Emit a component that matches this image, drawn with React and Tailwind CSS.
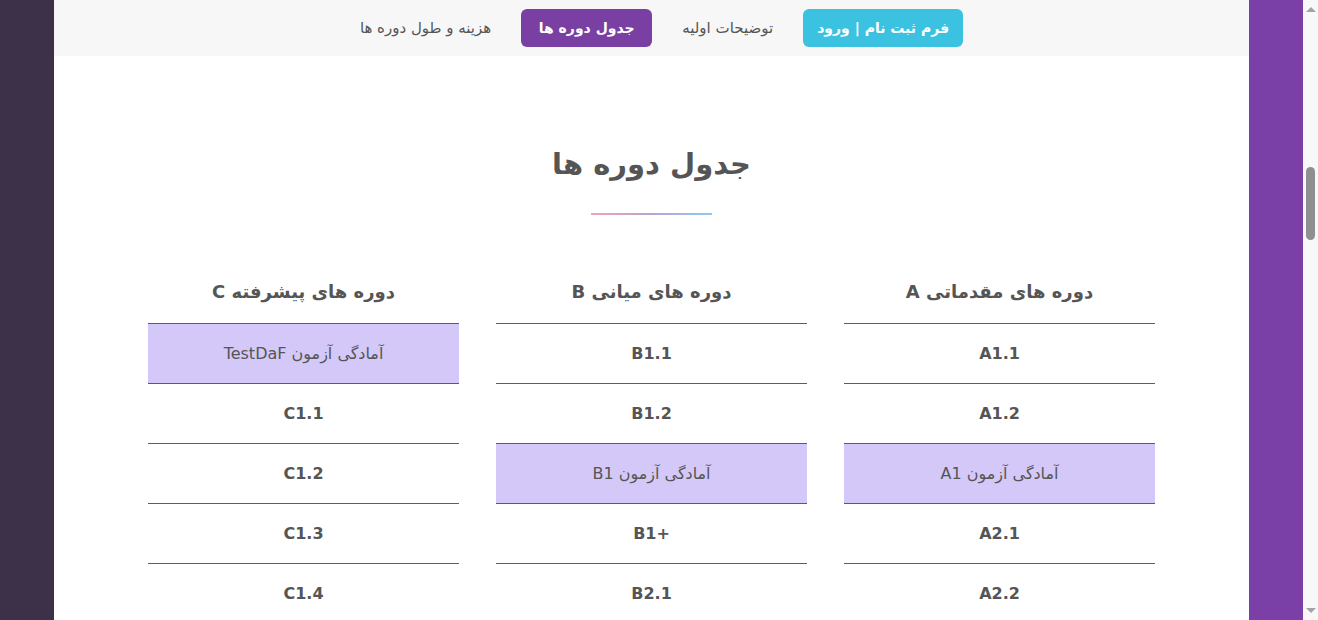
const font = { fontFamily: '"DejaVu Sans", "Noto Sans", sans-serif' };

const columns = [
  {
    title: "دوره های مقدماتی A",
    rows: [
      { label: "A1.1" },
      { label: "A1.2" },
      { label: "آمادگی آزمون A1", exam: true },
      { label: "A2.1" },
      { label: "A2.2" },
    ],
  },
  {
    title: "دوره های میانی B",
    rows: [
      { label: "B1.1" },
      { label: "B1.2" },
      { label: "آمادگی آزمون B1", exam: true },
      { label: "B1+" },
      { label: "B2.1" },
    ],
  },
  {
    title: "دوره های پیشرفته C",
    rows: [
      { label: "آمادگی آزمون TestDaF", exam: true },
      { label: "C1.1" },
      { label: "C1.2" },
      { label: "C1.3" },
      { label: "C1.4" },
    ],
  },
];

function NavBar() {
  return (
    <nav className="flex h-[56px] items-center justify-center bg-[#f7f7f7] pl-[20px]">
      <div dir="rtl" className="flex items-center gap-[30px] text-[14px]">
        <a className="flex h-[38px] w-[160px] items-center justify-center rounded-[6px] bg-[#3cc2e1] font-bold text-white">
          فرم ثبت نام | ورود
        </a>
        <a className="text-[15px] text-[#555]">توضیحات اولیه</a>
        <a className="flex h-[38px] w-[131px] items-center justify-center rounded-[6px] bg-[#7a3fa3] font-bold text-white">
          جدول دوره ها
        </a>
        <a className="text-[15px] text-[#555]">هزینه و طول دوره ها</a>
      </div>
    </nav>
  );
}

function CourseColumn({ column }) {
  return (
    <div className="w-[311px]">
      <h3 className="mb-[20px] h-[51px] pt-[29px] text-center text-[18px] font-bold leading-[22px] text-[#555]">
        {column.title}
      </h3>
      <div className="h-px bg-[#9d2bbf]" />
      {column.rows.map((row, i) => (
        <div key={i}>
          <div
            className={`flex h-[59px] items-center justify-center text-[16px] text-[#555] ${
              row.exam ? "bg-[#d4c8f9]" : "font-bold"
            }`}
          >
            <span dir="auto">{row.label}</span>
          </div>
          <div className={`h-px ${row.exam ? "bg-[#7a3fa3]" : "bg-[#9d2bbf]"}`} />
        </div>
      ))}
    </div>
  );
}

export default function App() {
  return (
    <div style={font} className="flex h-[620px] w-[1318px] overflow-hidden bg-[#3d3149]">
      <div className="w-[54px] shrink-0" />
      <div className="w-[1195px] shrink-0 bg-white">
        <NavBar />
        <section className="flex flex-col items-center">
          <h2 dir="rtl" className="mt-[89px] text-[29px] font-bold leading-[38px] text-[#555]">
            جدول دوره ها
          </h2>
          <div className="mt-[30px] h-[2px] w-[121px] bg-gradient-to-r from-[#f0a4b4] via-[#b9a3d2] to-[#8cc8f5]" />
          <div dir="rtl" className="mt-[37px] flex gap-[37px]">
            {columns.map((c, i) => (
              <CourseColumn key={i} column={c} />
            ))}
          </div>
        </section>
      </div>
      <div className="w-[54px] shrink-0 bg-[#7a40a8]" />
      <div className="relative flex w-[15px] shrink-0 flex-col items-center bg-[#f8f8f8]">
        <div className="mt-[7px] h-0 w-0 border-x-[5px] border-b-[5px] border-x-transparent border-b-[#a3a3a3]" />
        <div className="mt-[155px] h-[73px] w-[9px] rounded-full bg-[#8f8f8f]" />
        <div className="mt-auto mb-[7px] h-0 w-0 border-x-[5px] border-t-[5px] border-x-transparent border-t-[#a3a3a3]" />
      </div>
    </div>
  );
}
